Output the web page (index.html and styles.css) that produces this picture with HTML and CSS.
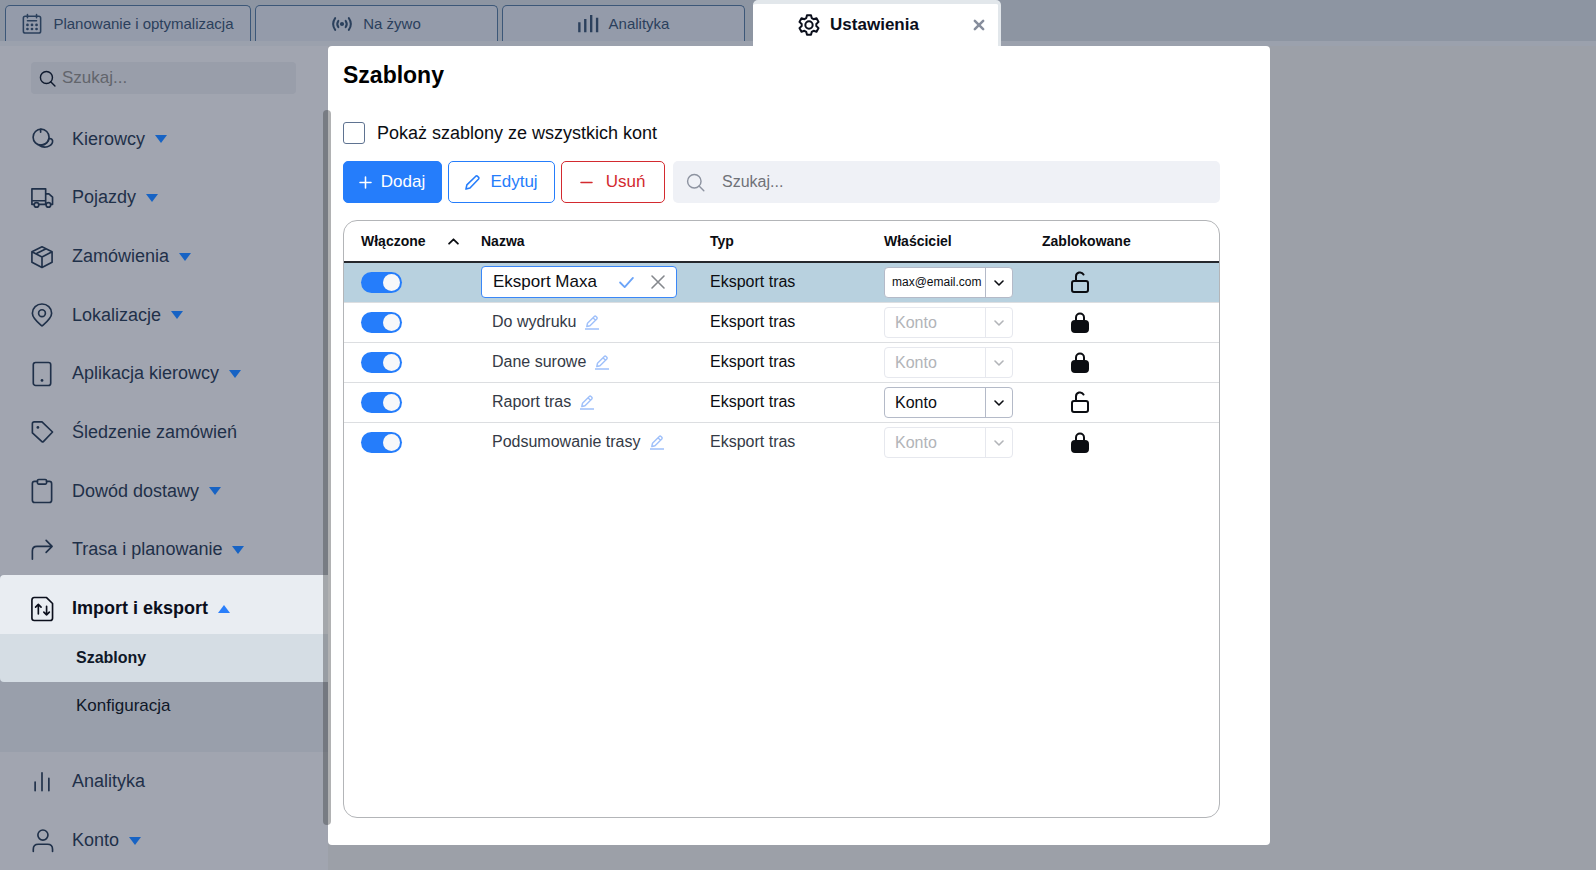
FILE: index.html
```html
<!DOCTYPE html>
<html lang="pl">
<head>
<meta charset="UTF-8" />
<meta name="viewport" content="width=device-width, initial-scale=1" />
<title>Ustawienia - Szablony</title>
<link rel="stylesheet" href="styles.css">
</head>
<body>
  <!-- Shared icons -->
  <svg class="sprite" aria-hidden="true">
    <symbol id="i-search" viewBox="0 0 24 24"><circle cx="10.5" cy="10.5" r="8.5"/><path d="M16.500 16.500l6 6"/></symbol>
    <symbol id="i-caret" viewBox="0 0 12 8"><path d="M0 0h12L6 8z"/></symbol>
    <symbol id="i-chevron" viewBox="0 0 10 6"><path d="M1 1l4 4 4-4"/></symbol>
    <symbol id="i-edit" viewBox="0 0 14 15"><path d="M2.5 8.200L9.300 1.400a1.200 1.200 0 0 1 1.700 0l.8.8a1.200 1.200 0 0 1 0 1.700L5 10.700l-3.200.8zM8 2.700l2.500 2.500M0 14h14"/></symbol>
    <symbol id="i-unlock" viewBox="0 0 20 22"><rect x="2" y="10" width="16" height="11" rx="2"/><path d="M6 10V5.500a4 4 0 0 1 7.500-2"/></symbol>
    <symbol id="i-lock" viewBox="0 0 20 22"><rect class="solid" x="2" y="10" width="16" height="11" rx="3"/><path d="M6 10V6.500a4 4 0 0 1 8 0V10"/></symbol>
  </svg>

  <!-- Tabs -->
  <header class="tabs">
    <button class="tab wide" type="button">
      <svg class="icon" viewBox="0 0 22 22"><rect x="1.500" y="2.500" width="19" height="18.500" rx="2"/><path d="M6 .5v3.500M16 .5v3.500M6 7.500h10"/><path class="dots" d="M6 12h.01M11 12h.01M16 12h.01M6 16.500h.01M11 16.500h.01M16 16.500h.01"/></svg>
      <span>Planowanie i optymalizacja</span>
    </button>
    <button class="tab" type="button">
      <svg class="icon bold" viewBox="0 0 22 22"><circle class="solid" cx="11" cy="11" r="1.200"/><path d="M3.500 4.500Q-1 11 3.500 17.500M18.500 4.500Q23 11 18.500 17.500M7 7.500Q4.500 11 7 14.500M15 7.500Q17.500 11 15 14.500"/></svg>
      <span>Na żywo</span>
    </button>
    <button class="tab" type="button">
      <svg class="icon bars" viewBox="0 0 22 22"><path d="M1.500 9v11M8 5.500V20M14.500 1v19M21 4v16"/></svg>
      <span>Analityka</span>
    </button>
    <div class="tab active">
      <button class="tab-label" type="button">
        <svg class="icon bold" viewBox="0 0 24 24"><circle cx="12" cy="12" r="4"/><path d="M9.800 1.300h4.400l.8 3.200 2 1.200 3.200-1 2.200 3.900-2.400 2.300v2.200l2.400 2.300-2.200 3.900-3.200-1-2 1.200-.8 3.200H9.800L9 19.500l-2-1.200-3.200 1-2.200-3.900L4 13.100v-2.200L1.600 8.600l2.200-3.900 3.200 1 2-1.200z"/></svg>
        <span>Ustawienia</span>
      </button>
      <button class="tab-close" type="button" aria-label="Zamknij"><svg viewBox="0 0 12 12"><path d="M1 1l10 10M11 1L1 11"/></svg></button>
    </div>
  </header>

  <div class="layout">
    <!-- Sidebar -->
    <nav class="sidebar" aria-label="Ustawienia">
      <label class="side-search">
        <svg class="icon"><use href="#i-search"/></svg>
        <input type="search" placeholder="Szukaj..." aria-label="Szukaj w menu">
      </label>
      <div class="menu">
        <a class="item" href="#"><svg class="icon" viewBox="0 0 24 24"><circle cx="11" cy="10" r="8.700"/><path d="M10.500 1.500v3M19.500 11.500c3-.3 4.500 1.500 4 4-1 4.500-9 7.500-14.500 3.300M19.500 11.500c-.5 3.500-4 6.500-8.500 7"/></svg><span>Kierowcy</span><svg class="caret"><use href="#i-caret"/></svg></a>
        <a class="item" href="#"><svg class="icon" viewBox="0 0 24 24"><path d="M3.500 19H1V2h15v17H8.500M16 7.500h3.500L23.500 11v8h-2M16.500 19H16M1 15h15"/><circle cx="6" cy="19.500" r="2.500"/><circle cx="19" cy="19.500" r="2.500"/></svg><span>Pojazdy</span><svg class="caret"><use href="#i-caret"/></svg></a>
        <a class="item" href="#"><svg class="icon" viewBox="0 0 24 24"><path d="M12 .8l11 5.500v11.500l-11 5.700-11-5.700V6.300zM1 6.300L12 12l11-5.700M12 12v11.500M6.500 9.200V8L16.500 3"/></svg><span>Zamówienia</span><svg class="caret"><use href="#i-caret"/></svg></a>
        <a class="item" href="#"><svg class="icon" viewBox="0 0 24 24"><path d="M12 24C8 20.500 1.500 15.500 1.500 10a10.500 10 0 0 1 21 0c0 5.500-6.500 10.500-10.500 14z"/><circle cx="12" cy="10" r="3.700"/></svg><span>Lokalizacje</span><svg class="caret"><use href="#i-caret"/></svg></a>
        <a class="item" href="#"><svg class="icon" viewBox="0 0 24 24"><rect x="2.500" y="-.5" width="19" height="25" rx="2.500"/><path class="dots" d="M12 19h.01"/></svg><span>Aplikacja kierowcy</span><svg class="caret"><use href="#i-caret"/></svg></a>
        <a class="item" href="#"><svg class="icon" viewBox="0 0 24 24"><path d="M1.500 3q0-2 2-2H12L23.500 12 13.500 22.500q-.8.800-1.600 0L1.500 13z"/><path class="dots" d="M7.500 7h.01"/></svg><span>Śledzenie zamówień</span></a>
        <a class="item" href="#"><svg class="icon" viewBox="0 0 24 24"><path d="M7 1.500H4Q1.500 1.500 1.500 4v18q0 2.500 2.500 2.500h16q2.500 0 2.500-2.500V4q0-2.500-2.500-2.500h-3"/><rect x="7" y="-.5" width="10" height="5" rx="1.500"/></svg><span>Dowód dostawy</span><svg class="caret"><use href="#i-caret"/></svg></a>
        <a class="item" href="#"><svg class="icon" viewBox="0 0 24 24"><path d="M1.500 22v-9Q1.500 8 6.500 8H23M16.500 1.500L23 8l-6.500 6.500"/></svg><span>Trasa i planowanie</span><svg class="caret"><use href="#i-caret"/></svg></a>
      </div>
      <div class="group">
        <a class="item current" href="#"><svg class="icon" viewBox="0 0 24 24"><path d="M3.500-.5H17l6.500 6.500v16q0 2.500-2.500 2.500H3.500Q1 24.500 1 22V2.500Q1-.5 3.500-.5z"/><path d="M8 17.500V7M5 10l3-3 3 3M17 9v9.500M14 15.500l3 3 3-3"/></svg><span>Import i eksport</span><svg class="caret up"><use href="#i-caret"/></svg></a>
        <a class="subitem current" href="#">Szablony</a>
        <a class="subitem" href="#">Konfiguracja</a>
      </div>
      <div class="menu-bottom">
        <a class="item" href="#"><svg class="icon" viewBox="0 0 24 24"><path d="M4.500 12v9.500M12 2v19.500M19.500 8v13.500"/></svg><span>Analityka</span></a>
        <a class="item" href="#"><svg class="icon" viewBox="0 0 24 24"><circle cx="13" cy="5.500" r="5.500"/><path d="M2.500 23.500V21q0-5.500 5.500-5.500h10q5.500 0 5.500 5.500v2.500"/></svg><span>Konto</span><svg class="caret"><use href="#i-caret"/></svg></a>
      </div>
      <div class="scrollbar"></div>
    </nav>

    <!-- Content -->
    <main class="panel">
      <h1>Szablony</h1>
      <label class="show-all"><input type="checkbox"> Pokaż szablony ze wszystkich kont</label>
      <div class="toolbar">
        <button class="btn primary" type="button"><svg viewBox="0 0 12 12"><path d="M6 0v12M0 6h12"/></svg>Dodaj</button>
        <button class="btn edit" type="button"><svg viewBox="0 0 16 16"><path d="M1 15l1-4.500L11.500 1.300q.9-.7 1.800 0l1.200 1.200q.8.900 0 1.800L5.300 13.800z"/></svg>Edytuj</button>
        <button class="btn delete" type="button"><svg viewBox="0 0 12 12"><path d="M0 6h12"/></svg>Usuń</button>
        <label class="search">
          <svg><use href="#i-search"/></svg>
          <input type="search" placeholder="Szukaj..." aria-label="Szukaj szablonu">
        </label>
      </div>

      <div class="card">
        <table>
          <thead>
            <tr>
              <th class="c-on"><span class="sort">Włączone <svg><use href="#i-chevron"/></svg></span></th>
              <th class="c-name">Nazwa</th>
              <th class="c-type">Typ</th>
              <th class="c-owner">Właściciel</th>
              <th class="c-lock">Zablokowane</th>
            </tr>
          </thead>
          <tbody>
            <tr class="selected">
              <td><input class="switch" type="checkbox" aria-label="Włączone" checked></td>
              <td>
                <div class="name-edit">
                  <input type="text" value="Eksport Maxa" aria-label="Nazwa">
                  <button type="button" class="ok" aria-label="Zapisz"><svg viewBox="0 0 16 12"><path d="M1 6l5 5L15 1"/></svg></button>
                  <button type="button" class="cancel" aria-label="Anuluj"><svg viewBox="0 0 12 12"><path d="M0 0l12 12M12 0L0 12"/></svg></button>
                </div>
              </td>
              <td>Eksport tras</td>
              <td><div class="select email"><select aria-label="Właściciel"><option>max@email.com</option></select><svg><use href="#i-chevron"/></svg></div></td>
              <td><svg class="lock"><use href="#i-unlock"/></svg></td>
            </tr>
            <tr>
              <td><input class="switch" type="checkbox" aria-label="Włączone" checked></td>
              <td><div class="name">Do wydruku <svg><use href="#i-edit"/></svg></div></td>
              <td>Eksport tras</td>
              <td><div class="select"><select aria-label="Właściciel" disabled><option>Konto</option></select><svg><use href="#i-chevron"/></svg></div></td>
              <td><svg class="lock"><use href="#i-lock"/></svg></td>
            </tr>
            <tr>
              <td><input class="switch" type="checkbox" aria-label="Włączone" checked></td>
              <td><div class="name">Dane surowe <svg><use href="#i-edit"/></svg></div></td>
              <td>Eksport tras</td>
              <td><div class="select"><select aria-label="Właściciel" disabled><option>Konto</option></select><svg><use href="#i-chevron"/></svg></div></td>
              <td><svg class="lock"><use href="#i-lock"/></svg></td>
            </tr>
            <tr>
              <td><input class="switch" type="checkbox" aria-label="Włączone" checked></td>
              <td><div class="name">Raport tras <svg><use href="#i-edit"/></svg></div></td>
              <td>Eksport tras</td>
              <td><div class="select"><select aria-label="Właściciel"><option>Konto</option></select><svg><use href="#i-chevron"/></svg></div></td>
              <td><svg class="lock"><use href="#i-unlock"/></svg></td>
            </tr>
            <tr>
              <td><input class="switch" type="checkbox" aria-label="Włączone" checked></td>
              <td><div class="name">Podsumowanie trasy <svg><use href="#i-edit"/></svg></div></td>
              <td class="muted">Eksport tras</td>
              <td><div class="select"><select aria-label="Właściciel" disabled><option>Konto</option></select><svg><use href="#i-chevron"/></svg></div></td>
              <td><svg class="lock"><use href="#i-lock"/></svg></td>
            </tr>
          </tbody>
        </table>
      </div>
    </main>
  </div>
</body>
</html>
```
FILE: styles.css
```css
* {
  box-sizing: border-box;
}

body {
  margin: 0;
  min-height: 100vh;
  display: flex;
  flex-direction: column;
  font-family: "Liberation Sans", Arial, sans-serif;
  font-size: 16px;
  color: #0b0d12;
  background: #9ca0a8;
}

button, input, select {
  font: inherit;
  color: inherit;
}

button {
  padding: 0;
  border: none;
  background: none;
  cursor: pointer;
}

input[type="search"] {
  appearance: none;
  flex: 1;
  min-width: 0;
  padding: 0;
  border: none;
  outline: none;
  background: none;
}

svg {
  flex: none;
  fill: none;
  stroke: currentColor;
  stroke-width: 2;
  stroke-linecap: round;
  stroke-linejoin: round;
  overflow: visible;
}

.sprite {
  position: absolute;
  width: 0;
  height: 0;
}

.solid {
  fill: currentColor;
}

.dots {
  stroke-width: 3;
}

/* Tabs */
.tabs {
  position: relative;
  z-index: 1;
  display: flex;
  gap: 4px;
  height: 46px;
  padding-left: 5px;
  background: #8d95a2;
  border-bottom: 5px solid #9ba1ad;
}

.tab {
  flex: 0 1 243px;
  display: flex;
  align-items: center;
  justify-content: center;
  gap: 11px;
  margin-top: 5px;
  border: 1px solid #3c5778;
  border-bottom: none;
  border-radius: 5px 5px 0 0;
  background: #949baa;
  color: #2b405c;
  font-size: 15px;
  white-space: nowrap;
}

.tab.wide {
  flex-basis: 246px;
}

.tab .icon {
  width: 20px;
  height: 20px;
  stroke-width: 1.7;
}

.tab .icon.bold {
  stroke-width: 2.2;
}

.tab .icon.bars {
  stroke-width: 2.6;
  stroke-linecap: butt;
}

.tab.active {
  flex-basis: 248px;
  gap: 0;
  margin: 0 0 -5px 4px;
  border: none;
  border-top: 4px solid #e2e7eb;
  border-right: 3px solid #e2e7eb;
  background: #fff;
  color: #0b0f1c;
  font-size: 17px;
  font-weight: bold;
}

.tab-label {
  flex: 1;
  display: flex;
  align-items: center;
  justify-content: center;
  gap: 10px;
}

.tab.active .icon {
  width: 22px;
  height: 22px;
}

.tab-close {
  width: 34px;
  text-align: left;
  color: #868d9c;
}

.tab-close svg {
  width: 10px;
  height: 10px;
  margin-left: 10px;
  stroke-width: 3;
}

.layout {
  flex: 1;
  display: flex;
}

/* Sidebar */
.sidebar {
  position: relative;
  flex: none;
  width: 328px;
  display: flex;
  flex-direction: column;
  background: #a1a5b0;
  color: #1f3049;
  font-size: 18px;
}

.side-search {
  display: flex;
  align-items: center;
  gap: 6px;
  height: 32px;
  margin: 16px 32px 12px 31px;
  padding: 0 8px;
  border-radius: 4px;
  background: #999eaa;
  color: #0f1a2e;
  font-size: 17px;
}

.side-search .icon {
  width: 17px;
  height: 17px;
}

.side-search ::placeholder {
  color: #62656c;
}

.menu {
  flex: 1;
  display: grid;
  grid-auto-rows: 1fr;
}

.item {
  display: flex;
  align-items: center;
  gap: 10px;
  min-height: 40px;
  padding: 8px 0 0 31px;
  color: inherit;
  text-decoration: none;
}

.item .icon {
  width: 22px;
  height: 24px;
  margin-right: 9px;
  stroke-width: 1.8;
}

.caret {
  width: 12px;
  height: 8px;
  fill: #1763c4;
  stroke: none;
}

.caret.up {
  fill: #2a7ffb;
  transform: rotate(180deg);
}

.group {
  padding-bottom: 22px;
  background: #999fab;
  color: #0f1728;
}

.item.current {
  height: 59px;
  border-radius: 4px 0 0 0;
  background: #e9edf2;
  color: #0b0f1c;
  font-weight: bold;
}

.subitem {
  display: flex;
  align-items: center;
  height: 48px;
  padding-left: 76px;
  color: inherit;
  font-size: 17px;
  text-decoration: none;
}

.subitem.current {
  border-radius: 0 0 0 4px;
  background: #d5dde4;
  font-size: 16px;
  font-weight: bold;
}

.menu-bottom .item {
  height: 59px;
  padding-top: 0;
}

.scrollbar {
  position: absolute;
  top: 64px;
  right: -3px;
  bottom: 45px;
  width: 8px;
  border-radius: 4px;
  background: rgba(60, 62, 66, 0.4);
}

/* Content */
.panel {
  flex: 0 1 942px;
  display: flex;
  flex-direction: column;
  margin-bottom: 25px;
  padding: 15px 50px 27px 15px;
  border-radius: 4px;
  background: #fff;
}

h1 {
  margin: 0 0 33px;
  font-size: 23px;
  line-height: 28px;
  color: #000;
}

.show-all {
  display: flex;
  align-items: center;
  gap: 12px;
  height: 22px;
  font-size: 18px;
}

.show-all input {
  appearance: none;
  width: 22px;
  height: 22px;
  margin: 0;
  border: 1px solid #5f7391;
  border-radius: 3px;
  background: #fff;
}

.toolbar {
  display: flex;
  gap: 6px;
  margin: 17px 0;
}

.btn {
  display: flex;
  align-items: center;
  justify-content: center;
  gap: 10px;
  height: 42px;
  border: 1px solid currentColor;
  border-radius: 5px;
  font-size: 17px;
}

.btn svg {
  width: 11px;
  height: 11px;
  stroke-width: 1.7;
}

.btn.primary {
  width: 99px;
  border-color: #257dfb;
  background: #257dfb;
  color: #fff;
}

.btn.edit {
  width: 107px;
  color: #257dfb;
}

.btn.edit svg {
  width: 15px;
  height: 15px;
}

.btn.delete {
  width: 104px;
  gap: 14px;
  color: #d32a2f;
}

.search {
  flex: 1;
  display: flex;
  align-items: center;
  gap: 17px;
  margin-left: 2px;
  padding: 0 13px;
  border-radius: 5px;
  background: #eff1f6;
}

.search svg {
  width: 19px;
  height: 19px;
  color: #8d93a0;
  stroke-width: 1.8;
}

.search ::placeholder {
  color: #6f7278;
}

.card {
  flex: 1;
  overflow: hidden;
  border: 1px solid #b3b5b8;
  border-radius: 14px;
}

table {
  width: 100%;
  table-layout: fixed;
  border-collapse: collapse;
}

th {
  height: 41px;
  padding: 0;
  border-bottom: 2px solid #25282d;
  font-size: 14px;
  text-align: left;
}

td {
  height: 40px;
  padding: 0;
  border-bottom: 1px solid #dcdee1;
}

tr:last-child td {
  border-bottom: none;
}

th:first-child, td:first-child {
  padding-left: 17px;
}

.c-on {
  width: 137px;
}

.c-name {
  width: 229px;
}

.c-type {
  width: 174px;
}

.c-owner {
  width: 158px;
}

.sort {
  display: flex;
  align-items: center;
  gap: 22px;
}

.sort svg {
  width: 11px;
  height: 7px;
  stroke-width: 1.6;
  transform: rotate(180deg);
}

.selected td {
  background: #b8d1df;
}

.muted {
  color: #343a46;
}

.switch {
  appearance: none;
  display: block;
  width: 41px;
  height: 21px;
  margin: 0;
  padding: 2px;
  border-radius: 11px;
  background: #257dfb;
}

.switch::before {
  content: "";
  display: block;
  width: 17px;
  height: 17px;
  border-radius: 50%;
  background: #f7f8fa;
}

.switch:checked::before {
  margin-left: auto;
}

.name-edit {
  display: flex;
  align-items: center;
  width: 196px;
  height: 32px;
  padding: 0 12px 0 11px;
  border: 1px solid #3a87f7;
  border-radius: 4px;
  background: #fff;
  font-size: 17px;
}

.name-edit input {
  flex: 1;
  min-width: 0;
  padding: 0;
  border: none;
  outline: none;
  background: none;
}

.name-edit button {
  display: flex;
}

.ok {
  margin-right: 18px;
  color: #6ba4f8;
}

.ok svg {
  width: 15px;
  height: 11px;
}

.cancel {
  color: #85888d;
}

.cancel svg {
  width: 12px;
  height: 12px;
  stroke-width: 1.6;
}

.name {
  display: flex;
  align-items: center;
  gap: 9px;
  padding-left: 11px;
  color: #343a46;
}

.name svg {
  width: 14px;
  height: 15px;
  color: #9fc0fa;
  stroke-width: 1.4;
}

.select {
  position: relative;
  width: 129px;
}

.select select {
  appearance: none;
  display: block;
  width: 100%;
  height: 31px;
  padding: 0 28px 0 10px;
  border: 1px solid #b4bac8;
  border-radius: 4px;
  background: linear-gradient(#b4bac8, #b4bac8) right 26px top / 1px 100% no-repeat #fff;
}

.select select:disabled {
  border-color: #e6e8ee;
  background: linear-gradient(#e6e8ee, #e6e8ee) right 26px top / 1px 100% no-repeat #fff;
  color: #b2b4b8;
  opacity: 1;
}

.select.email select {
  padding-left: 7px;
  font-size: 12px;
}

.select svg {
  position: absolute;
  top: 13px;
  right: 9px;
  width: 10px;
  height: 6px;
  stroke-width: 1.6;
  pointer-events: none;
}

.select select:disabled + svg {
  color: #b2b4b8;
}

.lock {
  display: block;
  width: 20px;
  height: 22px;
  margin-left: 28px;
}
```
